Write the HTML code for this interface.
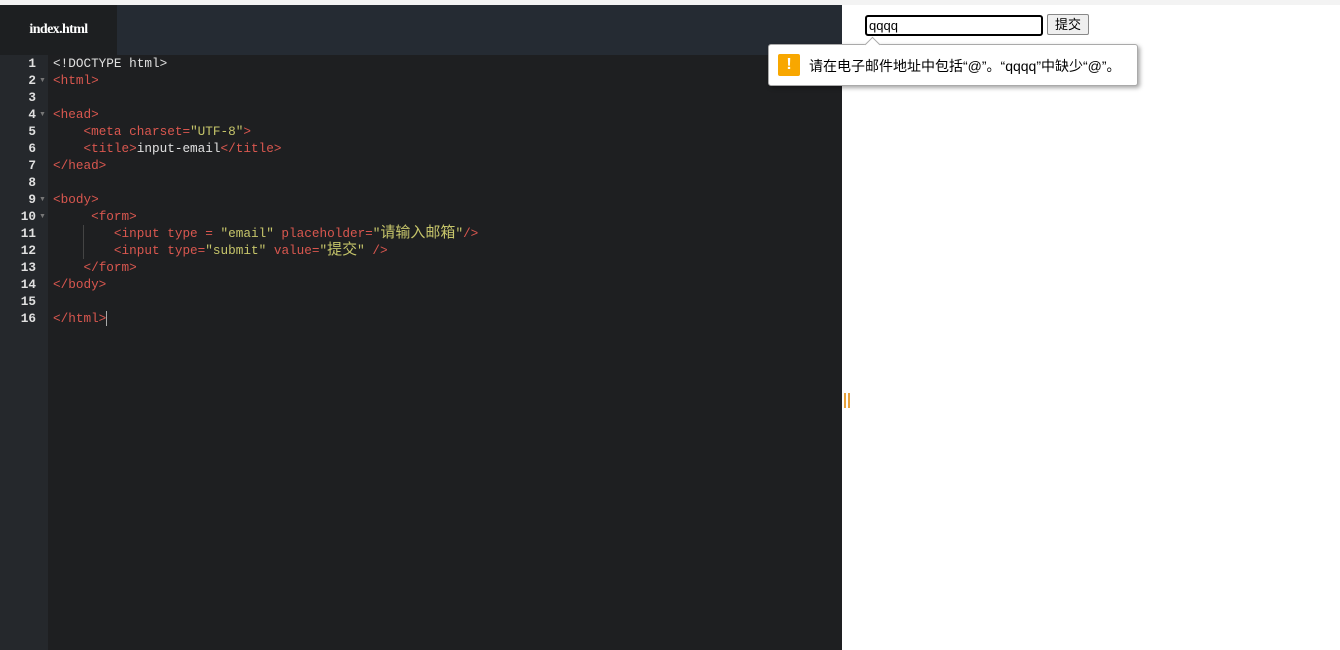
<!DOCTYPE html>
<html><head><meta charset="utf-8"><style>
body{margin:0;width:1340px;height:650px;overflow:hidden;background:#fff;position:relative;font-family:"Liberation Sans","Noto Sans CJK SC",sans-serif}
.top{position:absolute;left:0;top:0;width:1340px;height:5px;background:#f3f3f3}
.tabbar{position:absolute;left:0;top:5px;width:842px;height:50px;background:#252b33}
.tab{position:absolute;left:0;top:0;width:117px;height:50px;background:#1d1f21;color:#fff;font-family:"Liberation Serif",serif;font-size:14px;line-height:50px;text-align:center;letter-spacing:-0.6px;font-weight:bold}
.gut{position:absolute;left:0;top:55px;width:48px;height:595px;background:#25282c}
.ed{position:absolute;left:48px;top:55px;width:794px;height:595px;background:#1e1f21}
.ln{position:absolute;left:0;top:55px;width:36px;text-align:right;font-family:"Liberation Mono",monospace;font-size:12.7px;line-height:17px;color:#e0e0e0;font-weight:bold}
.code{position:absolute;left:53px;top:55px;font-family:"Liberation Mono","Noto Sans CJK SC",monospace;font-size:12.7px;line-height:17px;color:#e0e0e0;white-space:pre}
.ln div,.code div{height:17px}
.t{color:#d9574f}.s{color:#c6c56a}
.cj{font-size:15px;letter-spacing:0px}
.fold{position:absolute;left:39px;font-size:7px;color:#777}
.guide{position:absolute;left:83px;top:225px;width:1px;height:34px;background:#444}
.cur{display:inline-block;width:1px;height:15px;background:#aaa;vertical-align:middle}
.inp{position:absolute;left:865px;top:15px;width:178px;border:2px solid #000;border-radius:3px;font-size:13px;line-height:17px;padding-left:2px;box-sizing:border-box;height:21px}
.btn{position:absolute;left:1047px;top:14px;width:42px;height:21px;border:1px solid #888;border-radius:2px;background:#efefef;font-size:13px;line-height:20px;text-align:center;box-sizing:border-box}
.tip{position:absolute;left:768px;top:44px;width:370px;height:42px;background:#fff;border:1px solid #aaa;border-radius:3px;box-shadow:2px 2px 4px rgba(0,0,0,.35);box-sizing:border-box}
.arrow{position:absolute;left:867px;top:39px;width:10px;height:10px;background:#fff;border-left:1px solid #aaa;border-top:1px solid #aaa;transform:rotate(45deg)}
.ic{position:absolute;left:9px;top:9px;width:22px;height:22px;background:#f8a700;border-radius:2px;color:#fff;font-weight:bold;font-size:16px;text-align:center;line-height:22px}
.msg{position:absolute;left:40px;top:0;line-height:42px;font-size:14px;color:#000;white-space:nowrap}
.bars{position:absolute;left:844px;top:393px;width:2px;height:15px;background:#e8a23c;box-shadow:4px 0 0 #e8a23c}
</style></head><body>
<div class="top"></div>
<div class="tabbar"><div class="tab">index.html</div></div>
<div class="gut"></div><div class="ed"></div>
<div class="ln">
<div>1</div><div>2</div><div>3</div><div>4</div><div>5</div><div>6</div><div>7</div><div>8</div><div>9</div><div>10</div><div>11</div><div>12</div><div>13</div><div>14</div><div>15</div><div>16</div></div>
<div class="fold" style="top:77px">▼</div><div class="fold" style="top:111px">▼</div><div class="fold" style="top:196px">▼</div><div class="fold" style="top:213px">▼</div>
<div class="guide"></div>
<div class="code"><div>&lt;!DOCTYPE html&gt;</div><div class="t">&lt;html&gt;</div><div></div><div class="t">&lt;head&gt;</div><div>    <span class="t">&lt;meta charset=</span><span class="s">"UTF-8"</span><span class="t">&gt;</span></div><div>    <span class="t">&lt;title&gt;</span>input-email<span class="t">&lt;/title&gt;</span></div><div class="t">&lt;/head&gt;</div><div></div><div class="t">&lt;body&gt;</div><div>     <span class="t">&lt;form&gt;</span></div><div>        <span class="t">&lt;input type = </span><span class="s">"email"</span><span class="t"> placeholder=</span><span class="s">"<span class="cj">请输入邮箱</span>"</span><span class="t">/&gt;</span></div><div>        <span class="t">&lt;input type=</span><span class="s">"submit"</span><span class="t"> value=</span><span class="s">"<span class="cj">提交</span>" </span><span class="t">/&gt;</span></div><div>    <span class="t">&lt;/form&gt;</span></div><div class="t">&lt;/body&gt;</div><div></div><div><span class="t">&lt;/html&gt;</span><span class="cur"></span></div></div>
<div class="bars"></div>
<div class="inp">qqqq</div>
<div class="btn">提交</div>
<div class="tip"><div class="ic">!</div><div class="msg">请在电子邮件地址中包括“@”。“qqqq”中缺少“@”。</div></div>
<div class="arrow"></div>
</body></html>
